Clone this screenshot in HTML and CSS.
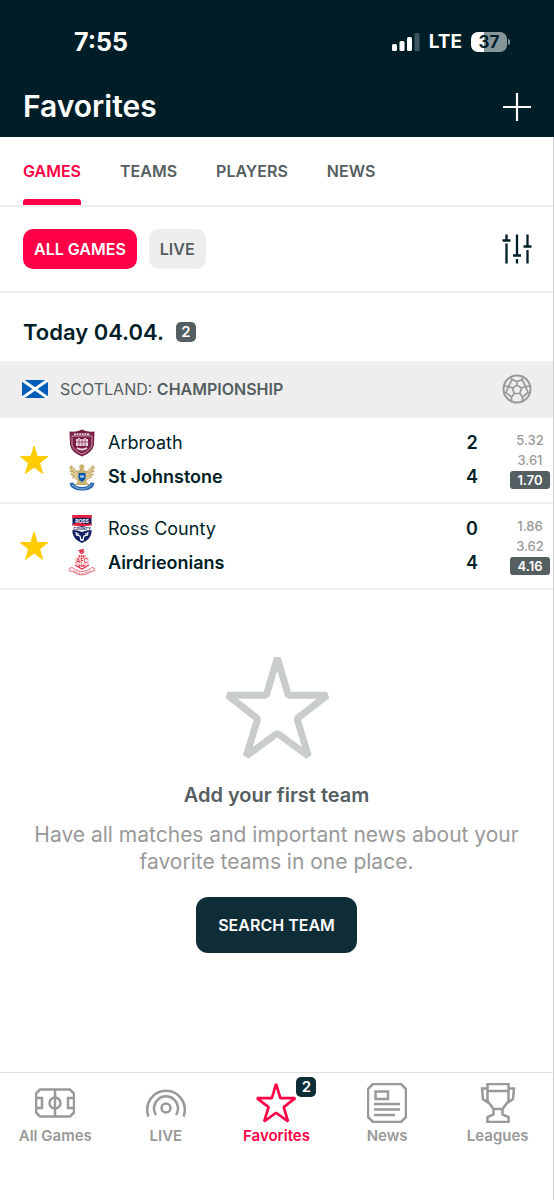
FILE: index.html
```html
<!DOCTYPE html>
<html lang="en">
<head>
    <meta charset="UTF-8">
    <meta name="viewport" content="width=device-width, initial-scale=1.0">
    <title>Favorites</title>
    <link rel="stylesheet" href="styles.css">
</head>
<body>
    <svg class="defs" width="0" height="0" aria-hidden="true">
        <symbol id="star" viewBox="0 0 104 104">
            <path d="M52.3 2L63.3 39.3H102L72 62.7L83.3 100L52.3 77.3L21.3 100L32.7 62.7L2.6 39.3H41.3Z"/>
        </symbol>
    </svg>

    <header class="header">
        <div class="status-bar">
            <span class="time">7:55</span>
            <div class="status-icons">
                <svg width="28" height="18" viewBox="0 0 28 18" fill="#fff">
                    <rect x="0" y="11" width="5" height="7" rx="1.5"/>
                    <rect x="7.5" y="8" width="5" height="10" rx="1.5"/>
                    <rect x="15" y="4" width="5" height="14" rx="1.5"/>
                    <rect x="22.5" y="0" width="5" height="18" rx="1.5" opacity=".25"/>
                </svg>
                <span class="network">LTE</span>
                <span class="battery">37</span>
            </div>
        </div>
        <div class="title-bar">
            <h1>Favorites</h1>
            <button class="icon-button" aria-label="Add">
                <svg width="28" height="28" viewBox="0 0 28 28" fill="none" stroke="#fff" stroke-width="2.2"><path d="M14 0V28M0 14H28"/></svg>
            </button>
        </div>
    </header>

    <main>
        <nav class="tabs">
            <a href="#games" class="active">GAMES</a>
            <a href="#teams">TEAMS</a>
            <a href="#players">PLAYERS</a>
            <a href="#news">NEWS</a>
        </nav>

        <div class="filters">
            <button class="pill active">ALL GAMES</button>
            <button class="pill">LIVE</button>
            <button class="icon-button settings" aria-label="Settings">
                <svg width="30" height="30" viewBox="0 0 30 30" fill="none" stroke="#001e28" stroke-width="2.3"><path d="M4.5 0.5V6M4.5 9.5V29.5M0.5 6.5H8.5M15 0.5V21M15 25V29.5M11 21.5H19M25.5 0.5V12M25.5 16V29.5M21.5 12.5H29.5"/></svg>
            </button>
        </div>

        <h2 class="day">Today 04.04. <span class="count">2</span></h2>

        <div class="league">
            <svg width="26" height="18" viewBox="0 0 26 18">
                <rect width="26" height="18" fill="#005eb8"/>
                <path d="M0 0L26 18M26 0L0 18" stroke="#fff" stroke-width="3"/>
            </svg>
            <span class="league-name">SCOTLAND: <b>CHAMPIONSHIP</b></span>
            <svg class="ball" width="30" height="30" viewBox="0 0 30 30" fill="none" stroke="#999" stroke-width="1.7">
                <circle cx="15" cy="15" r="13.5" stroke-width="2"/>
                <path d="M15 11L19.5 14L17.8 19.5H12.2L10.5 14ZM15 11V7.5M19.5 14L23.5 12.5M17.8 19.5L20.5 23M12.2 19.5L9.5 23M10.5 14L6.5 12.5M9 3L10 5.5L15 7.5L20 5.5L21 3M20 5.5L23.5 12.5L28 12M23.5 12.5L26 18.5L20.5 23V27M26 18.5L28 19M10 5.5L6.5 12.5L2 12M6.5 12.5L4 18.5L9.5 23V27M4 18.5L2 19"/>
            </svg>
        </div>

        <ul class="matches">
            <li class="match">
                <button class="icon-button favorite" aria-label="Remove from favorites"><svg width="28" height="28"><use href="#star"/></svg></button>
                <div class="teams">
                    <div class="team">
                        <svg width="28" height="28" viewBox="0 0 28 28">
                            <path d="M14 .5L18 2Q22 3 26.5 2.5L26 16Q24 24 14 27.5Q4 24 2 16L1.5 2.5Q6 3 10 2Z" fill="#7b1f46"/>
                            <path d="M4 7H24V16Q22 22 14 25Q6 22 4 16Z" fill="none" stroke="#d9b9c8" stroke-width=".8"/>
                            <path d="M6 5.3H22" stroke="#dfc4d0" stroke-width="2" stroke-dasharray="2 .6"/>
                            <path d="M8 10H10V9H12V10H16V9H18V10H20V17H8Z" fill="#e7d4dc"/>
                            <path d="M8 13H20M11 10V17M14 10V17M17 10V17" stroke="#7b1f46" stroke-width=".7"/>
                            <path d="M9 19Q14 22 19 19" fill="none" stroke="#e7d4dc" stroke-width="2"/>
                        </svg>
                        <span>Arbroath</span>
                        <span class="score">2</span>
                    </div>
                    <div class="team winner">
                        <svg width="28" height="28" viewBox="0 0 28 28">
                            <path d="M12 7L11 3L14 1L16.5 3L15.5 7L19 8L25 2L27 5L25 7L27 8L24.5 10L26 12L23 13L24 15L20 16L18 19L22 22H6L10 19L8 16L4 15L5 13L2 12L3.5 10L1 8L3 7L1 5L3 2L9 8Z" fill="#c9b171"/>
                            <path d="M4 5L10 12M3 9L9 13M24 5L18 12M25 9L19 13M6 14L10 15M22 14L18 15" stroke="#fff3cf" stroke-width=".8"/>
                            <path d="M10.5 10H17.5V15Q17 17.5 14 19Q11 17.5 10.5 15Z" fill="#0759ad"/>
                            <path d="M12 13.5H16" stroke="#b9d4ef" stroke-width="2"/>
                            <path d="M1.5 20L5 19.5Q8 24 14 24Q20 24 23 19.5L26.5 20L25 24Q20 28 14 27.5Q8 28 3 24Z" fill="#2767b1"/>
                            <path d="M4.5 22Q9 26 14 25.8Q19 26 23.5 22" fill="none" stroke="#a9c6e7" stroke-width="1.2" stroke-dasharray="1.2 .8"/>
                        </svg>
                        <span>St Johnstone</span>
                        <span class="score">4</span>
                    </div>
                </div>
                <div class="odds">
                    <span>5.32</span>
                    <span>3.61</span>
                    <span class="hit">1.70</span>
                </div>
            </li>
            <li class="match">
                <button class="icon-button favorite" aria-label="Remove from favorites"><svg width="28" height="28"><use href="#star"/></svg></button>
                <div class="teams">
                    <div class="team">
                        <svg width="28" height="28" viewBox="0 0 28 28" class="crest">
                            <path d="M4.5 0H23.5V18Q22 25 14 28Q6 25 4.5 18Z" fill="#101f62"/>
                            <path d="M4.5 0H23.5V3.5Q14 2 4.5 3.5Z" fill="#e5203c"/>
                            <path d="M4.5 9Q10 7 15 8.5Q20 9.5 23.5 8V11H4.5Z" fill="#e5203c"/>
                            <path d="M4 10.5Q10 10.5 14 12Q18 10.5 24 10.5V15Q18 15 14 17Q10 15 4 15Z" fill="#fff"/>
                            <text x="14" y="8" font-size="5" fill="#fff">ROSS</text>
                            <text x="14" y="14.8" font-size="4" fill="#101f62">COUNTY</text>
                            <path d="M8 17L8.5 20L12 21L13 25H15L16 21L19.5 20L20 17M10 18V20M18 18V20" fill="none" stroke="#fff" stroke-width="1.3"/>
                        </svg>
                        <span>Ross County</span>
                        <span class="score">0</span>
                    </div>
                    <div class="team winner">
                        <svg width="28" height="28" viewBox="0 0 28 28" class="crest">
                            <path d="M16 .5L12 1.5L15.5 3L13 5M11.5 2.5L13 4" fill="none" stroke="#df3044" stroke-width="1.5"/>
                            <path d="M10.5 7.2H17.5M10.5 16.7H17.5" stroke="#df3044" stroke-width="2" stroke-dasharray="1.7 .5"/>
                            <path d="M8 9H20V15H8Z" fill="#fff" stroke="#e98b95" stroke-width=".7"/>
                            <text x="14" y="14" font-size="5.5" fill="#df3044">AFC</text>
                            <path d="M7 16L14 20L21 16" fill="none" stroke="#df3044" stroke-width="1.3"/>
                            <path d="M2 19Q5 17.5 6 20Q14 25 22 20Q23 17.5 26 19L26.5 22L23 22.5Q14 29.5 5 22.5L1.5 22Z" fill="#fff" stroke="#e6747f" stroke-width="1"/>
                            <path d="M6 22Q14 27 22 22" fill="none" stroke="#e6747f" stroke-width="1.5" stroke-dasharray="1 .8"/>
                        </svg>
                        <span>Airdrieonians</span>
                        <span class="score">4</span>
                    </div>
                </div>
                <div class="odds">
                    <span>1.86</span>
                    <span>3.62</span>
                    <span class="hit">4.16</span>
                </div>
            </li>
        </ul>

        <section class="empty">
            <svg class="outline-star" width="104" height="104"><use href="#star"/></svg>
            <h3>Add your first team</h3>
            <p>Have all matches and important news about your favorite teams in one place.</p>
            <button class="search-button">SEARCH TEAM</button>
        </section>
    </main>

    <nav class="bottom-nav">
        <a href="#all-games">
            <svg width="40" height="40" viewBox="0 0 40 40">
                <path d="M5 6.500H35L39 10.500V29.500L35 33.500H5L1 29.500V10.500ZM20 6.500V33.500M1 15H7V25H1M39 15H33V25H39"/>
                <circle cx="20" cy="20" r="5.500"/>
            </svg>
            All Games
        </a>
        <a href="#live">
            <svg width="40" height="40" viewBox="0 0 40 40">
                <circle cx="20" cy="25" r="4.5"/>
                <path d="M2.5 33.5A18.8 18.8 0 1 1 37.5 33.5M10 32A12 12 0 1 1 30 32"/>
            </svg>
            LIVE
        </a>
        <a href="#favorites" class="active">
            <span class="nav-icon">
                <svg class="outline-star" width="40" height="40"><use href="#star"/></svg>
                <span class="nav-badge">2</span>
            </span>
            Favorites
        </a>
        <a href="#news">
            <svg width="40" height="40" viewBox="0 0 40 40">
                <path d="M6 1H34L39 6V34L34 39H6L1 34V6ZM8.5 8.5H21V16H8.5ZM7 21H33M7 26.5H33M7 32H28"/>
            </svg>
            News
        </a>
        <a href="#leagues">
            <svg width="40" height="40" viewBox="0 0 40 40">
                <path d="M9.500 1H30.500V18L24.500 26V31.500L30.500 34V39H9.500V34L15.500 31.500V26L9.500 18ZM9.500 8H30.500M15.500 26H24.500M9.500 5.500H4L5 16L12 21M30.500 5.500H36L35 16L28 21"/>
            </svg>
            Leagues
        </a>
    </nav>
</body>
</html>
```
FILE: styles.css
```css
* {
    box-sizing: border-box;
}
body {
    margin: 0;
    min-height: 100vh;
    display: flex;
    flex-direction: column;
    font-family: Inter, "Liberation Sans", sans-serif;
    color: #001e28;
    background-color: #fff;
}
h1, h2, h3, p, ul {
    margin: 0;
    padding: 0;
}
button {
    font-family: inherit;
    border: none;
    cursor: pointer;
}
a {
    text-decoration: none;
}
svg {
    display: block;
    flex-shrink: 0;
}
.defs {
    position: absolute;
}
.icon-button {
    padding: 0;
    background: none;
}

/* header */
.header {
    background-color: #001e28;
    color: #fff;
}
.status-bar {
    display: flex;
    justify-content: space-between;
    align-items: center;
    padding: 26px 47px 0 74px;
    line-height: 32px;
}
.time {
    font-size: 25px;
    font-weight: 700;
}
.status-icons {
    display: flex;
    align-items: center;
    gap: 9px;
}
.network {
    font-size: 19px;
    font-weight: 700;
}
.battery {
    position: relative;
    width: 36px;
    border-radius: 7px;
    background: linear-gradient(to right, #fff 37%, #87969a 37%);
    color: #001e28;
    font-size: 17px;
    font-weight: 700;
    line-height: 20px;
    text-align: center;
}
.battery::after {
    content: "";
    position: absolute;
    right: -3px;
    top: 7px;
    width: 2px;
    height: 6px;
    border-radius: 0 2px 2px 0;
    background-color: #87969a;
}
.title-bar {
    display: flex;
    justify-content: space-between;
    align-items: center;
    padding: 28px 23px 10px;
}
h1 {
    font-size: 30px;
    font-weight: 600;
    line-height: 41px;
}

/* tabs and filters */
main {
    flex: 1;
    border-right: 1px solid #ccc;
}
.tabs {
    display: flex;
    gap: 39px;
    padding: 0 23px;
    border-bottom: 2px solid #eee;
}
.tabs a {
    padding: 24px 0;
    color: #555e61;
    font-size: 16px;
    font-weight: 600;
    line-height: 20px;
}
.tabs .active {
    position: relative;
    color: #ff0046;
}
.tabs .active::after {
    content: "";
    position: absolute;
    left: 0;
    right: 0;
    bottom: 0;
    height: 6px;
    border-radius: 3px 3px 0 0;
    background-color: #ff0046;
}
.filters {
    display: flex;
    align-items: center;
    gap: 12px;
    padding: 22px 21px 22px 23px;
    border-bottom: 2px solid #eee;
}
.pill {
    padding: 0 11px;
    border-radius: 10px;
    background-color: #eee;
    color: #555e61;
    font-size: 16px;
    font-weight: 600;
    line-height: 40px;
}
.pill.active {
    background-color: #ff0046;
    color: #fff;
}
.settings {
    margin-left: auto;
}

/* games */
.day {
    display: flex;
    align-items: center;
    gap: 12px;
    padding: 25px 23px 15px;
    font-size: 22px;
    font-weight: 600;
    line-height: 28px;
}
.count {
    width: 20px;
    border-radius: 5px;
    background-color: #555e61;
    color: #fff;
    font-size: 15px;
    line-height: 20px;
    text-align: center;
}
.league {
    display: flex;
    align-items: center;
    gap: 12px;
    padding: 13px 21px 14px 22px;
    background-color: #eee;
    color: #555e61;
    font-size: 16px;
    line-height: 30px;
}
.league b {
    font-weight: 600;
}
.ball {
    margin-left: auto;
}
.matches {
    list-style: none;
}
.match {
    display: flex;
    align-items: center;
    padding: 8px 3px 8px 20px;
    border-bottom: 2px solid #eee;
}
.favorite svg {
    fill: #ffcd00;
    stroke: #ffcd00;
    stroke-width: 5;
    stroke-linejoin: round;
}
.teams {
    flex: 1;
    margin-left: 20px;
}
.team {
    display: flex;
    align-items: center;
    gap: 12px;
    font-size: 18px;
    line-height: 34px;
}
.winner, .score {
    font-weight: 600;
}
.score {
    width: 20px;
    margin-left: auto;
    text-align: center;
}
.crest text {
    font-family: Inter, sans-serif;
    font-weight: 700;
    text-anchor: middle;
}
.odds {
    display: flex;
    flex-direction: column;
    gap: 2px;
    width: 40px;
    margin-left: 28px;
    color: #999;
    font-size: 13px;
    font-weight: 500;
    line-height: 18px;
    text-align: center;
}
.hit {
    border-radius: 3px;
    background-color: #555e61;
    color: #fff;
    font-weight: 600;
}

/* empty state */
.empty {
    display: flex;
    flex-direction: column;
    align-items: center;
    padding: 66px 30px 40px;
    text-align: center;
}
.outline-star {
    fill: none;
    stroke: #c8cccd;
    stroke-width: 7;
    stroke-linejoin: bevel;
}
.empty h3 {
    margin-top: 21px;
    color: #555e61;
    font-size: 20px;
    font-weight: 600;
    line-height: 28px;
}
.empty p {
    margin-top: 12px;
    color: #999;
    font-size: 21px;
    line-height: 27px;
}
.search-button {
    margin-top: 22px;
    padding: 0 22px;
    border-radius: 12px;
    background-color: #0f2d37;
    color: #fff;
    font-size: 16px;
    font-weight: 600;
    line-height: 56px;
}

/* bottom navigation */
.bottom-nav {
    display: grid;
    grid-template-columns: repeat(5, 1fr);
    padding: 10px 0 54px;
    border-top: 1px solid #ddd;
    border-right: 1px solid #ccc;
}
.bottom-nav a {
    display: flex;
    flex-direction: column;
    align-items: center;
    gap: 3px;
    color: #999;
    font-size: 15px;
    font-weight: 600;
    line-height: 20px;
}
.bottom-nav svg {
    fill: none;
    stroke: #999;
    stroke-width: 2.5;
}
.bottom-nav .active {
    color: #ff0046;
}
.bottom-nav .outline-star {
    stroke: #ff0046;
    stroke-width: 7;
}
.nav-icon {
    position: relative;
}
.nav-badge {
    position: absolute;
    top: -6px;
    right: -20px;
    width: 20px;
    border-radius: 5px;
    background-color: #0f2d37;
    color: #fff;
    font-size: 15px;
    text-align: center;
}
```
